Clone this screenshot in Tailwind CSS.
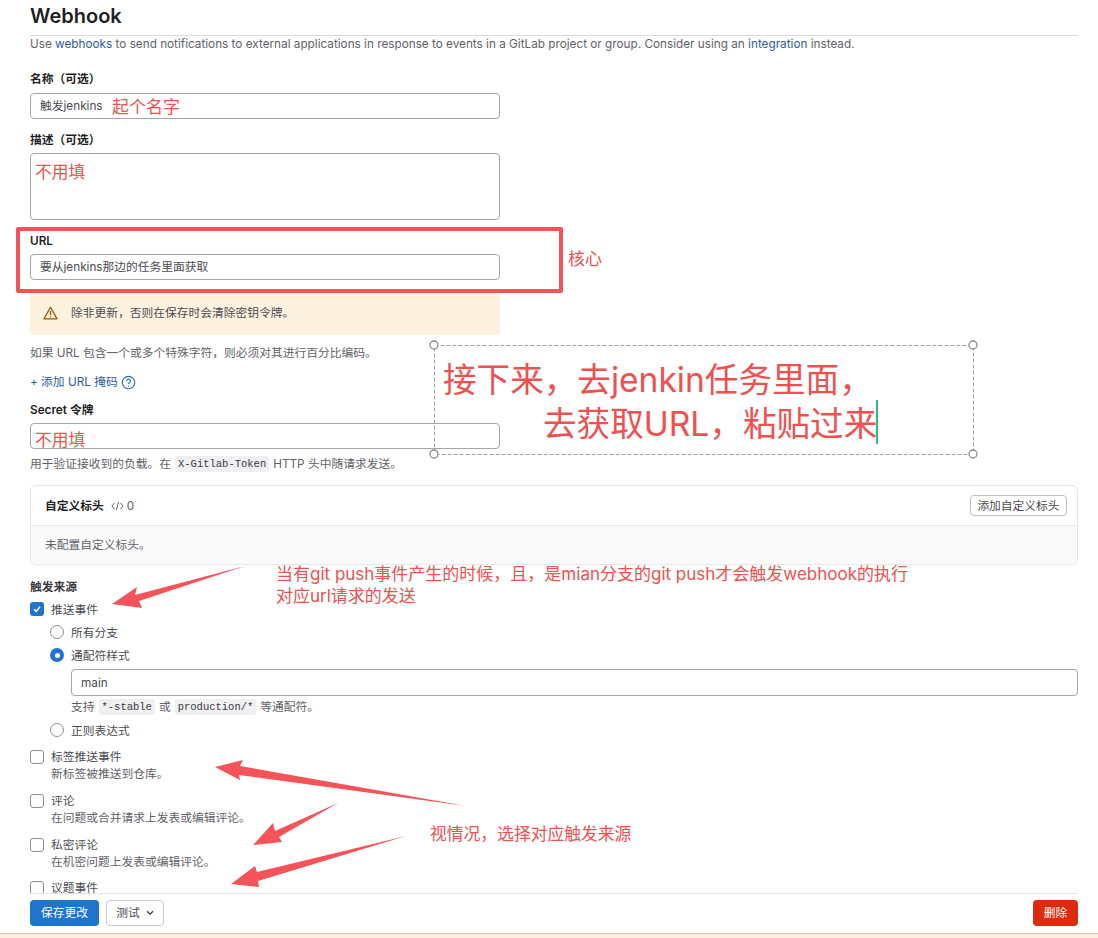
<!DOCTYPE html>
<html lang="zh-CN">
<head>
  <meta charset="UTF-8">
  <title>Webhook</title>
  <script src="https://cdn.jsdelivr.net/npm/@tailwindcss/browser@4"></script>
</head>
<body class="bg-white">
  <div class="relative h-[938px] w-[1098px] overflow-hidden bg-white font-['Inter','Noto_Sans_CJK_SC',sans-serif] text-[11.76px] leading-[16px] text-[#626168]">

    <!-- Form -->
    <main class="pl-[30px] pr-[20px]">
      <h1 class="h-[36px] border-b border-[#dcdcde] pt-[2px] text-[20px] font-semibold leading-[28px] text-[#1f1e24]">Webhook</h1>
      <p class="h-[16px]">Use <a class="text-[#2f5ca0]">webhooks</a> to send notifications to external applications in response to events in a GitLab project or group. Consider using an <a class="text-[#2f5ca0]">integration</a> instead.</p>

      <label class="mt-[19px] block h-[16px] font-semibold text-[#1f1e24]">名称（可选）</label>
      <div class="mt-[6px] flex h-[26px] w-[470px] items-center rounded-[4px] border border-[#a5a4aa] px-[9px] text-[#4c4b51]">触发jenkins</div>

      <label class="mt-[13px] block h-[16px] font-semibold text-[#1f1e24]">描述（可选）</label>
      <div class="mt-[5px] h-[67px] w-[470px] rounded-[4px] border border-[#a5a4aa]"></div>

      <label class="mt-[13px] block h-[16px] font-semibold text-[#1f1e24]">URL</label>
      <div class="mt-[5px] flex h-[26px] w-[470px] items-center rounded-[4px] border border-[#a5a4aa] px-[9px] text-[#4c4b51]">要从jenkins那边的任务里面获取</div>

      <div class="mt-[10px] flex h-[45px] w-[470px] items-center gap-[13px] rounded-b-[4px] bg-[#fdf1df] pl-[13px] text-[#4c4b51]">
        <svg width="15" height="14" viewBox="0 0 15 14" fill="none" stroke="#9e5400" stroke-width="1.3" stroke-linejoin="round"><path d="M7.5 1.2 14 12.8H1Z"/><path d="M7.5 5v4M7.5 10.2v1.1"/></svg>
        <span>除非更新，否则在保存时会清除密钥令牌。</span>
      </div>
      <p class="mt-[10px] h-[16px]">如果 URL 包含一个或多个特殊字符，则必须对其进行百分比编码。</p>

      <div class="mt-[13px] flex h-[16px] items-center gap-[3px] text-[#2f5ca0]">
        <span>+ 添加 URL 掩码</span>
        <svg width="15" height="15" viewBox="0 0 14 14" fill="none" stroke="#2f6cc0" stroke-width="1.1"><circle cx="7" cy="7" r="5.8"/><path d="M5.2 5.6a1.8 1.8 0 1 1 2.7 1.6c-.6.3-.9.7-.9 1.3"/><path d="M7 9.8v1"/></svg>
      </div>

      <label class="mt-[12px] block h-[16px] font-semibold text-[#1f1e24]">Secret 令牌</label>
      <div class="mt-[5px] h-[26px] w-[470px] rounded-[4px] border border-[#a5a4aa]"></div>
      <p class="mt-[7px] flex h-[16px] items-center">用于验证接收到的负载。在<code class="mx-[4px] rounded-[3px] bg-[#f0f0f2] px-[3px] font-['Liberation_Mono',monospace] text-[10.5px] text-[#3a383f]">X-Gitlab-Token</code>HTTP 头中随请求发送。</p>

      <!-- Custom headers card -->
      <section class="mt-[13px] h-[80px] w-[1048px] overflow-hidden rounded-[6px] border border-[#e6e6e9]">
        <div class="flex h-[40px] items-center border-b border-[#e6e6e9] pl-[14px] pr-[10px]">
          <span class="font-semibold text-[#1f1e24]">自定义标头</span>
          <svg class="ml-[7px]" width="13" height="10" viewBox="0 0 13 10" fill="none" stroke="#626168" stroke-width="1"><path d="M3.5 2 .9 5l2.6 3M9.5 2l2.6 3-2.6 3M7.6 1 5.4 9"/></svg>
          <span class="ml-[3px]">0</span>
          <button class="ml-auto h-[21px] w-[97px] rounded-[4px] border border-[#bfbfc3] text-[#4c4b51]">添加自定义标头</button>
        </div>
        <div class="flex h-[38px] items-center bg-[#fafafb] pl-[14px]">未配置自定义标头。</div>
      </section>

      <!-- Trigger sources -->
      <label class="mt-[14px] block h-[16px] font-semibold text-[#3a383f]">触发来源</label>
      <div class="mt-[6px] flex h-[16px] items-center gap-[7px] text-[#4c4b51]">
        <span class="flex size-[14px] items-center justify-center rounded-[3px] bg-[#1f75cb]">
          <svg width="10" height="10" viewBox="0 0 10 10" fill="none" stroke="#fff" stroke-width="1.5"><path d="M2 5.2 4.2 7.4 8 2.8"/></svg>
        </span>
        <span class="pt-[2px]">推送事件</span>
      </div>
      <div class="ml-[20px]">
        <div class="mt-[7px] flex h-[16px] items-center gap-[7px] text-[#4c4b51]">
          <span class="size-[14px] rounded-full border border-[#8f8e94]"></span><span class="pt-[2px]">所有分支</span>
        </div>
        <div class="mt-[7px] flex h-[16px] items-center gap-[7px] text-[#4c4b51]">
          <span class="flex size-[14px] items-center justify-center rounded-full bg-[#1f75cb]"><span class="size-[5px] rounded-full bg-white"></span></span><span class="pt-[2px]">通配符样式</span>
        </div>
        <div class="ml-[21px] mt-[6px] flex h-[27px] items-center rounded-[4px] border border-[#a5a4aa] px-[9px] text-[#4c4b51]">main</div>
        <p class="ml-[21px] mt-[2px] flex h-[17px] items-center">支持<code class="mx-[4px] rounded-[3px] bg-[#f0f0f2] px-[3px] font-['Liberation_Mono',monospace] text-[10.5px] text-[#3a383f]">*-stable</code>或<code class="mx-[4px] rounded-[3px] bg-[#f0f0f2] px-[3px] font-['Liberation_Mono',monospace] text-[10.5px] text-[#3a383f]">production/*</code>等通配符。</p>
        <div class="mt-[7px] flex h-[16px] items-center gap-[7px] text-[#4c4b51]">
          <span class="size-[14px] rounded-full border border-[#8f8e94]"></span><span class="pt-[2px]">正则表达式</span>
        </div>
      </div>

      <div class="mt-[10px] flex h-[33px] gap-[7px]">
        <span class="mt-[2px] size-[14px] rounded-[3px] border border-[#8f8e94]"></span>
        <div class="pt-[1px] leading-[17px]"><div class="text-[#4c4b51]">标签推送事件</div><div>新标签被推送到仓库。</div></div>
      </div>
      <div class="mt-[11px] flex h-[33px] gap-[7px]">
        <span class="mt-[2px] size-[14px] rounded-[3px] border border-[#8f8e94]"></span>
        <div class="pt-[1px] leading-[17px]"><div class="text-[#4c4b51]">评论</div><div>在问题或合并请求上发表或编辑评论。</div></div>
      </div>
      <div class="mt-[11px] flex h-[33px] gap-[7px]">
        <span class="mt-[2px] size-[14px] rounded-[3px] border border-[#8f8e94]"></span>
        <div class="pt-[1px] leading-[17px]"><div class="text-[#4c4b51]">私密评论</div><div>在机密问题上发表或编辑评论。</div></div>
      </div>
      <div class="mt-[10px] flex h-[33px] gap-[7px]">
        <span class="mt-[2px] size-[14px] rounded-[3px] border border-[#8f8e94]"></span>
        <div class="pt-[1px] text-[#4c4b51]">议题事件</div>
      </div>
    </main>

    <!-- Sticky footer, lies over the form -->
    <footer class="absolute bottom-0 left-0 right-0 h-[45px] bg-white">
      <div class="ml-[30px] mr-[20px] flex h-[40px] items-start justify-between border-t border-[#e6e6e9] pt-[6px]">
        <div class="flex gap-[7px]">
          <button class="h-[26px] w-[69px] rounded-[4px] bg-[#1f75cb] text-white">保存更改</button>
          <button class="flex h-[26px] w-[58px] items-center justify-center gap-[6px] rounded-[4px] border border-[#c9c9cd] text-[#4c4b51]">测试
            <svg width="8" height="6" viewBox="0 0 8 6" fill="none" stroke="#3a383f" stroke-width="1.3"><path d="M1 1.2 4 4.2l3-3"/></svg>
          </button>
        </div>
        <button class="h-[26px] w-[45px] rounded-[4px] bg-[#dd2b0e] text-white">删除</button>
      </div>
      <div class="h-[5px] border-t border-[#d9c7b5] bg-[#fbeee0]"></div>
    </footer>

    <!-- Screenshot annotations -->
    <div class="absolute left-[16px] top-[227px] h-[66px] w-[547px] rounded-[2px] border-[4px] border-[#f4535a]"></div>

    <svg class="absolute left-0 top-0" width="1098" height="938" fill="#f4535a">
      <polygon points="112,604 137,587 135,595 245,566 139,601 142,608"/>
      <polygon points="215,767 243,760 240,766 466,806 239,775 240,780"/>
      <polygon points="253,845 273,823 275,831 338,803 279,837 282,842"/>
      <polygon points="231,884 255,866 257,872 406,836 258,881 259,887"/>
      <rect x="434.5" y="345.5" width="539" height="109" fill="none" stroke="#a0a0a0" stroke-dasharray="4 2"/>
      <g fill="#fff" stroke="#8a8a8a" stroke-width="1.3">
        <circle cx="434" cy="345" r="4"/>
        <circle cx="973" cy="345" r="4"/>
        <circle cx="434" cy="454" r="4"/>
        <circle cx="973" cy="454" r="4"/>
      </g>
      <rect x="876" y="400" width="2" height="44" fill="#2bbd7e"/>
    </svg>

    <div class="absolute left-[112px] top-[95px] text-[17px] leading-[24px] text-[#f05050]">起个名字</div>
    <div class="absolute left-[35px] top-[160px] text-[16.8px] leading-[24px] text-[#f05050]">不用填</div>
    <div class="absolute left-[568px] top-[247px] text-[17px] leading-[24px] text-[#f05050]">核心</div>
    <div class="absolute left-[35px] top-[428px] text-[16.8px] leading-[24px] text-[#f05050]">不用填</div>
    <div class="absolute left-[443px] top-[358px] w-[525px] text-[33.6px] leading-[44px] text-[#f05050]">
      <div>接下来，去jenkin任务里面，</div>
      <div class="pl-[100px]">去获取URL，粘贴过来</div>
    </div>
    <div class="absolute left-[276px] top-[563px] text-[17px] leading-[22px] text-[#f05050]">
      <div>当有git push事件产生的时候，且，是mian分支的git push才会触发webhook的执行</div>
      <div>对应url请求的发送</div>
    </div>
    <div class="absolute left-[430px] top-[822px] text-[16.8px] leading-[24px] text-[#f05050]">视情况，选择对应触发来源</div>
  </div>
</body>
</html>
